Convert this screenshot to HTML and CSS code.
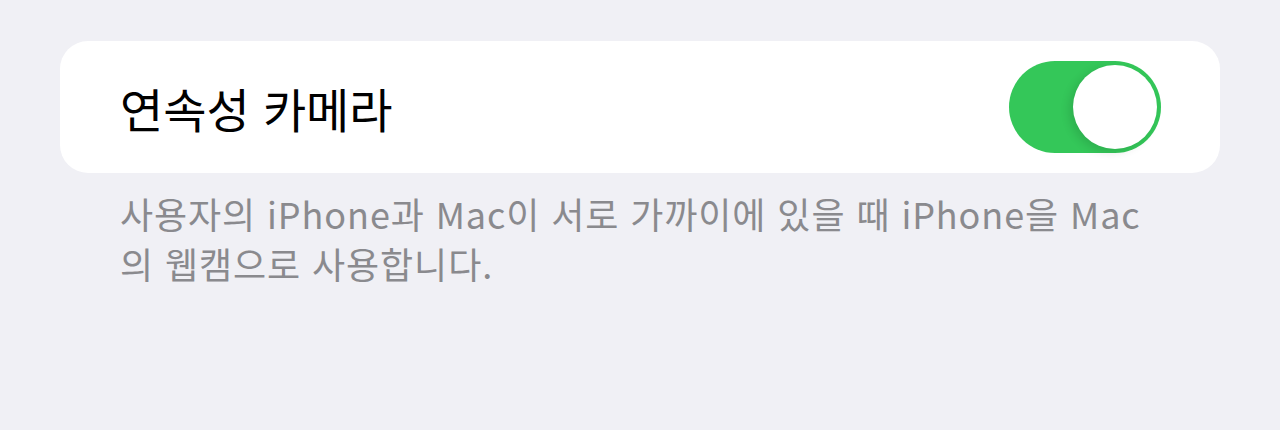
FILE: index.html
```html
<!DOCTYPE html>
<html lang="ko">
<head>
  <meta charset="UTF-8">
  <meta name="viewport" content="width=device-width, initial-scale=1">
  <title>연속성 카메라</title>
  <link rel="stylesheet" href="styles.css">
</head>
<body>
  <div class="container">
    <div class="card">
      <span class="label">연속성 카메라</span>
      <div class="toggle on">
        <div class="knob"></div>
      </div>
    </div>
    <p class="footer">사용자의 iPhone과 Mac이 서로 가까이에 있을 때 iPhone을 Mac의 웹캠으로 사용합니다.</p>
  </div>
</body>
</html>
```

FILE: styles.css
```css
* {
  box-sizing: border-box;
}
body {
  margin: 0;
  padding: 0;
  background-color: #f0f0f5;
  font-family: "Noto Sans CJK KR", "Noto Sans", sans-serif;
}
.container {
  padding: 41px 60px 0 60px;
}
.card {
  height: 132px;
  background: #fff;
  border-radius: 28px;
  display: flex;
  align-items: center;
  justify-content: space-between;
  padding: 0 59px 0 60px;
}
.label {
  font-size: 47px;
  color: #000;
}
.toggle {
  width: 152px;
  height: 92px;
  border-radius: 46px;
  background: #34c759;
  position: relative;
}
.knob {
  position: absolute;
  right: 4px;
  top: 4px;
  width: 84px;
  height: 84px;
  border-radius: 50%;
  background: #fff;
  box-shadow: -4px 3px 10px rgba(0,0,0,0.12);
}
.footer {
  margin: 15px 0 0 60px;
  width: 1030px;
  font-size: 36px;
  line-height: 50px;
  letter-spacing: 0.9px;
  color: #8a8a8e;
}
```
